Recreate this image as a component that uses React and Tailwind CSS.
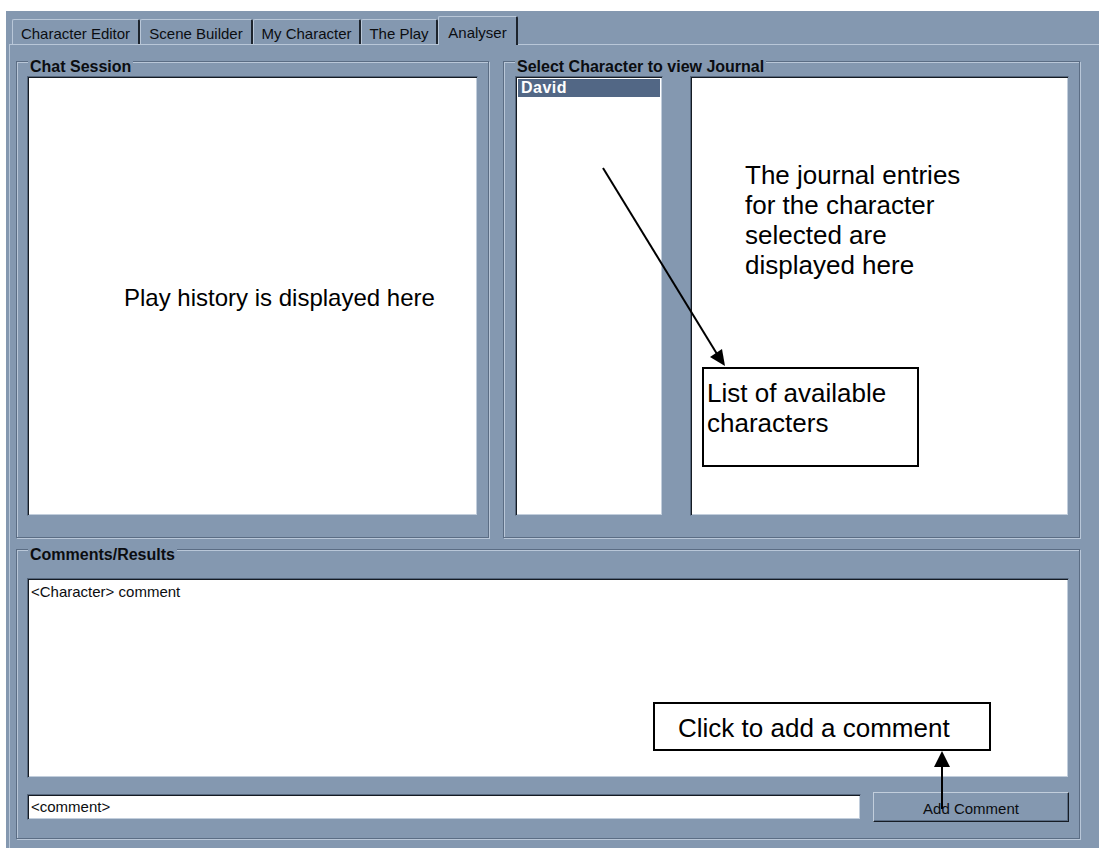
import React from "react";

const face = "bg-[#8498b0]";

// sunken white well: dark top/left, light bottom/right
const well =
  "bg-white border border-[#8498b0] border-t-[#56677d] border-l-[#56677d] shadow-[inset_1px_1px_0_#151b23,inset_-1px_-1px_0_#c2cedc]";

function GroupBox({ label, className, children }) {
  return (
    <div
      className={`relative border border-[#5b6d84] shadow-[inset_1px_1px_0_#b9c7d8,1px_1px_0_#b9c7d8] ${className}`}
    >
      <span className={`absolute -top-[4px] left-[11px] ${face} px-[2px] text-[16px] leading-[18px] font-bold text-[#0b0d10]`}>
        {label}
      </span>
      {children}
    </div>
  );
}

function Tab({ label, width, active }) {
  if (active) {
    return (
      <div
        className={`${width} h-[29px] -mb-px z-10 ${face} rounded-t-[2px] border-l border-t border-[#b9c7d8] border-r-2 border-r-[#1d242d] pt-[7px] text-center text-[15px] leading-[17px] text-[#0b0d10]`}
      >
        {label}
      </div>
    );
  }
  return (
    <div
      className={`${width} h-[25px] rounded-t-[2px] border-l border-t border-[#b9c7d8] border-r-2 border-r-[#1d242d] pt-[5px] text-center text-[15px] leading-[17px] text-[#0b0d10]`}
    >
      {label}
    </div>
  );
}

export default function App() {
  return (
    <div className="relative w-[1099px] h-[848px] overflow-hidden bg-white pt-[11px] pl-[6px] font-['Liberation_Sans',Arial,sans-serif]">
      <div className={`h-full ${face} pt-[5px] pl-[3px] flex flex-col`}>
        {/* tab strip */}
        <div className="flex items-end h-[28px] pl-[3px]">
          <Tab label="Character Editor" width="w-[128px]" />
          <Tab label="Scene Builder" width="w-[113px]" />
          <Tab label="My Character" width="w-[108px]" />
          <Tab label="The Play" width="w-[77px]" />
          <Tab label="Analyser" width="w-[80px]" active />
        </div>

        {/* tab page */}
        <div className="flex-1 w-[1100px] border-t border-l border-[#b9c7d8] pt-[16px] pl-[6px]">
          <div className="flex gap-[14px]">
            <GroupBox label="Chat Session" className="w-[473px] h-[477px] px-[10px] pt-[14px] pb-[21px]">
              <div className={`${well} h-full`} />
            </GroupBox>

            <GroupBox
              label="Select Character to view Journal"
              className="w-[577px] h-[477px] pl-[11px] pr-[10px] pt-[14px] pb-[21px] flex gap-[27px]"
            >
              <div className={`${well} w-[148px] h-full p-[2px]`}>
                <div className="bg-[#526785] h-[18px] pl-[3px] text-[16px] leading-[18px] font-bold text-white tracking-[0.5px]">
                  David
                </div>
              </div>
              <div className={`${well} flex-1 h-full`} />
            </GroupBox>
          </div>

          <GroupBox label="Comments/Results" className="mt-[11px] w-[1064px] h-[290px] px-[10px] pt-[28px] pb-[16px] flex flex-col">
            <div className={`${well} h-[200px] px-[3px] pt-[4px] text-[15px] leading-[17px] text-[#0b0d10]`}>
              &lt;Character&gt; comment
            </div>
            <div className="mt-[14px] h-[30px] flex items-center gap-[12px]">
              <div className={`${well} flex-1 h-[26px] px-[3px] pt-[3px] text-[15px] leading-[17px] text-[#0b0d10]`}>
                &lt;comment&gt;
              </div>
              <button className="w-[196px] h-[30px] border border-t-[#c2cedc] border-l-[#c2cedc] border-r-[#161c24] border-b-[#161c24] shadow-[inset_-1px_-1px_0_#5b6d84] text-[15px] leading-[17px] text-[#0b0d10] pt-[2px]">
                Add Comment
              </button>
            </div>
          </GroupBox>
        </div>
      </div>

      {/* callouts drawn over the form */}
      <div className="absolute left-[124px] top-[284px] text-[24px] leading-[28px] text-black">
        Play history is displayed here
      </div>
      <div className="absolute left-[745px] top-[160px] text-[26px] leading-[30px] text-black">
        The journal entries
        <br />
        for the character
        <br />
        selected are
        <br />
        displayed here
      </div>
      <div className="absolute left-[702px] top-[367px] w-[217px] h-[100px] border-2 border-black bg-white pl-[3px] pt-[9px] text-[26px] leading-[30px] text-black">
        List of available
        <br />
        characters
      </div>
      <div className="absolute left-[653px] top-[702px] w-[338px] h-[49px] border-2 border-black bg-white pl-[23px] pt-[9px] text-[26px] leading-[30px] text-black">
        Click to add a comment
      </div>

      <svg className="absolute inset-0 pointer-events-none" width="1099" height="848">
        <line x1="603" y1="168" x2="717" y2="354" stroke="#000" strokeWidth="2" />
        <polygon points="725,366 710,357 722,349" fill="#000" />
        <line x1="942" y1="764" x2="942" y2="809" stroke="#000" strokeWidth="2" />
        <polygon points="942,751 934,767 950,767" fill="#000" />
      </svg>
    </div>
  );
}
